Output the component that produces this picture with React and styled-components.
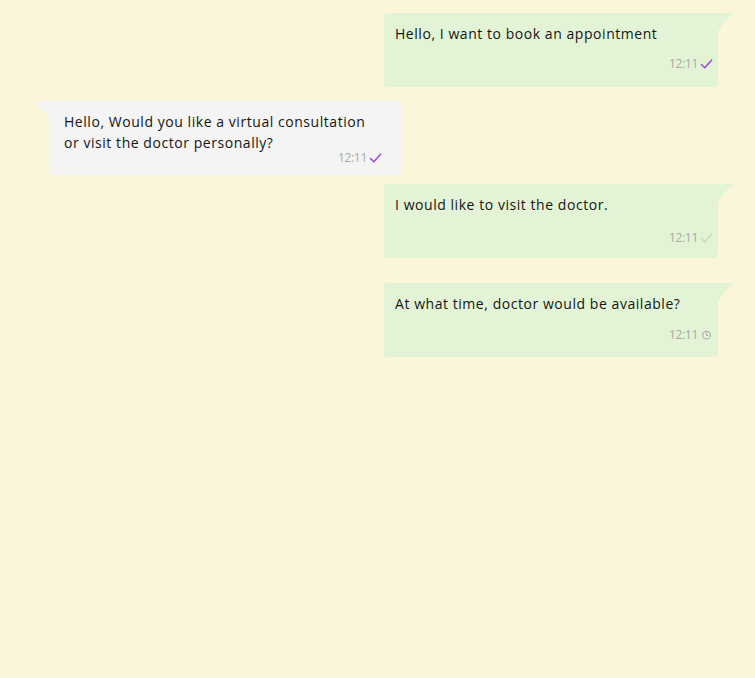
import React from 'react';
import styled, { createGlobalStyle } from 'styled-components';

const GlobalStyle = createGlobalStyle`
  html, body {
    margin: 0;
    padding: 0;
    background: #fbf6da;
  }
  body {
    font-family: "Open Sans", "Liberation Sans", sans-serif;
    color: #141414;
  }
`;

const ChatWindow = styled.div`
  display: flex;
  flex-direction: column;
  min-height: 678px;
  padding: 13px 37px 0 50px;
  box-sizing: border-box;
  background: #fbf6da;
`;

const MessageRow = styled.div`
  display: flex;
  justify-content: ${props => (props.$out ? 'flex-end' : 'flex-start')};
  margin-top: ${props => props.$gap || 0}px;
`;

const Bubble = styled.div`
  position: relative;
  box-sizing: border-box;
  width: ${props => (props.$out ? 334 : 351)}px;
  height: 74px;
  padding: 10px ${props => (props.$out ? 5 : 19)}px 0 ${props => (props.$out ? 11 : 14)}px;
  background: ${props => (props.$out ? '#e3f4d6' : '#f4f4f4')};
  border-radius: ${props => (props.$out ? '4px 0 4px 4px' : '0 4px 4px 4px')};
`;

const Tail = styled.svg`
  position: absolute;
  top: 0;
  ${props => (props.$out ? 'left: 100%;' : 'right: 100%;')}
  width: 18px;
  height: 20px;
`;

const Text = styled.p`
  margin: 0;
  max-width: 305px;
  font-size: 14px;
  line-height: 21px;
  letter-spacing: 0.55px;
`;

const Meta = styled.div`
  display: flex;
  justify-content: flex-end;
  align-items: center;
  gap: 2px;
  height: 12px;
  line-height: 12px;
  margin-top: ${props => props.$top}px;
  font-size: 12px;
  color: #a8a8a8;
  letter-spacing: -0.3px;
`;

const TickIcon = ({ color }) => (
  <svg width="13" height="12" viewBox="0 0 13 12">
    <path d="M1.5 6.5 L4.8 9.8 L11.5 2.2" fill="none" stroke={color} strokeWidth="1.6" strokeLinecap="round" strokeLinejoin="round" />
  </svg>
);

const ClockIcon = () => (
  <svg width="13" height="12" viewBox="0 0 13 12">
    <circle cx="6.5" cy="6.2" r="3.8" fill="none" stroke="#a8a8a8" strokeWidth="1.1" />
    <path d="M6.5 4.2 V6.4 H8" fill="none" stroke="#a8a8a8" strokeWidth="1" strokeLinecap="round" />
  </svg>
);

const messages = [
  { out: true, gap: 0, text: 'Hello, I want to book an appointment', metaTop: 14, status: 'read' },
  { out: false, gap: 14, text: 'Hello, Would you like a virtual consultation or visit the doctor personally?', metaTop: -1, status: 'read' },
  { out: true, gap: 9, text: 'I would like to visit the doctor.', metaTop: 17, status: 'sent' },
  { out: true, gap: 25, text: 'At what time, doctor would be available?', metaTop: 15, status: 'pending' },
];

const Status = ({ status }) => {
  if (status === 'pending') return <ClockIcon />;
  return <TickIcon color={status === 'read' ? '#9b4ed6' : '#cfd6c8'} />;
};

const App = () => (
  <>
    <GlobalStyle />
    <ChatWindow>
      {messages.map((m, i) => (
        <MessageRow key={i} $out={m.out} $gap={m.gap}>
          <Bubble $out={m.out}>
            <Tail $out={m.out} viewBox="0 0 18 20">
              {m.out ? (
                <path d="M0 0 H17 Q6 7 0 19 Z" fill="#e3f4d6" />
              ) : (
                <path d="M18 0 H0 Q11 6 18 20 Z" fill="#f4f4f4" />
              )}
            </Tail>
            <Text>{m.text}</Text>
            <Meta $top={m.metaTop}>
              <span>12:11</span>
              <Status status={m.status} />
            </Meta>
          </Bubble>
        </MessageRow>
      ))}
    </ChatWindow>
  </>
);

export default App;
